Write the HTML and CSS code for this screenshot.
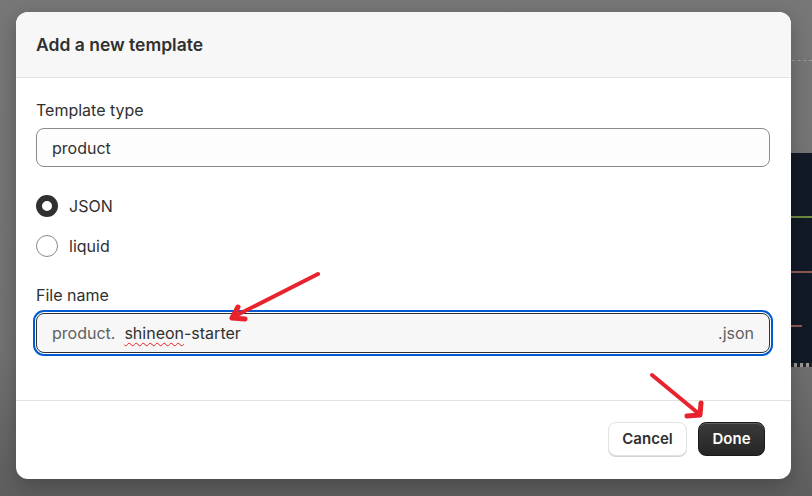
FILE: index.html
```html
<!DOCTYPE html>
<html>
<head>
<meta charset="utf-8">
<link rel="stylesheet" href="styles.css">
</head>
<body>
<div class="backdrop">
  <div class="bg-dash"></div>
  <div class="bg-panel">
    <div class="bg-line green"></div>
    <div class="bg-line red1"></div>
    <div class="bg-line red2"></div>
  </div>
  <div class="bg-checker"></div>
</div>
<div class="modal">
  <div class="modal-header">Add a new template</div>
  <div class="modal-body">
    <div class="field">
      <label class="label">Template type</label>
      <div class="input">product</div>
    </div>
    <div class="radios">
      <div class="radio-row"><span class="radio checked"></span><span>JSON</span></div>
      <div class="radio-row"><span class="radio"></span><span>liquid</span></div>
    </div>
    <div class="field">
      <label class="label">File name</label>
      <div class="input focus">
        <span class="prefix">product.</span>
        <span class="value"><span class="misspelled">shineon</span>-starter</span>
        <span class="suffix">.json</span>
      </div>
    </div>
  </div>
  <div class="modal-footer">
    <button class="btn cancel">Cancel</button>
    <button class="btn done">Done</button>
  </div>
</div>
<svg class="arrows" width="812" height="496" viewBox="0 0 812 496">
  <g stroke="#e8232d" stroke-linecap="round" stroke-linejoin="round" fill="none">
    <line x1="318" y1="274" x2="235" y2="316" stroke-width="4"/>
    <polyline points="238,307 232,318 245,319" stroke-width="5"/>
    <line x1="652" y1="375" x2="698" y2="413" stroke-width="4"/>
    <polyline points="701,403 700,415 687,416" stroke-width="5"/>
  </g>
</svg>
</body>
</html>
```
FILE: styles.css
```css
* { box-sizing: border-box; }
html, body { margin: 0; padding: 0; }
body {
  width: 812px;
  height: 496px;
  overflow: hidden;
  position: relative;
  background: linear-gradient(180deg, #777777 0%, #727272 70%, #5e5e5e 100%);
  font-family: Inter, "Noto Sans", sans-serif;
  color: #303030;
  padding: 12px 21px 17px 16px;
}
.backdrop { position: absolute; inset: 0; }
.bg-dash {
  position: absolute; left: 792px; top: 60px; width: 20px; height: 0;
  border-top: 1px dashed #9a9a9a;
}
.bg-panel {
  position: absolute; left: 791px; top: 153px; width: 21px; height: 211px;
  background: #121a27;
}
.bg-line { position: absolute; left: 0; height: 2px; }
.bg-line.green { top: 63px; width: 21px; background: #6d8a3e; }
.bg-line.red1 { top: 118px; width: 21px; background: #8d5a52; }
.bg-line.red2 { top: 172px; width: 11px; background: #8d5a52; }
.bg-checker {
  position: absolute; left: 791px; top: 363px; width: 21px; height: 4px;
  background: repeating-linear-gradient(90deg, #222 0 3px, #999 3px 6px);
}
.modal {
  position: relative;
  width: 775px;
  height: 467px;
  background: #fff;
  border-radius: 12px;
  overflow: hidden;
  display: flex;
  flex-direction: column;
  box-shadow: 0 6px 20px rgba(0,0,0,0.25);
}
.modal-header {
  height: 66px;
  background: #f7f7f7;
  border-bottom: 1px solid #e3e3e3;
  padding: 0 20px;
  display: flex;
  align-items: center;
  font-size: 17.5px;
  font-weight: 600;
  color: #303030;
  flex-shrink: 0;
}
.modal-body {
  flex: 1;
  padding: 22px 21px 0 20px;
  display: flex;
  flex-direction: column;
}
.field { display: flex; flex-direction: column; }
.label {
  font-size: 16px;
  line-height: 20px;
  margin-bottom: 8px;
  color: #303030;
}
.input {
  height: 39px;
  border: 1px solid #8a8a8a;
  border-radius: 8px;
  background: #fdfdfd;
  display: flex;
  align-items: center;
  padding: 0 15px;
  font-size: 16px;
  color: #303030;
}
.input.focus {
  height: 40px;
  background: #f7f7f7;
  border: 1px solid #303030;
  outline: 2px solid #005bd3;
  outline-offset: 1px;
}
.prefix { color: #616161; margin-right: 9px; }
.value { flex: 1; }
.misspelled {
  text-decoration: underline wavy #e51c23;
  text-decoration-thickness: 1px;
  text-underline-offset: 3px;
}
.suffix { color: #616161; }
.radios {
  display: flex;
  flex-direction: column;
  gap: 17px;
  padding: 27px 0 28px;
}
.radio-row {
  display: flex;
  align-items: center;
  gap: 11px;
  font-size: 16px;
  height: 23px;
}
.radio {
  width: 22px; height: 22px;
  border-radius: 50%;
  border: 1px solid #8a8a8a;
  background: #fff;
}
.radio.checked { border: 6px solid #303030; }
.modal-footer {
  height: 79px;
  border-top: 1px solid #e3e3e3;
  display: flex;
  justify-content: flex-end;
  align-items: center;
  gap: 11px;
  padding: 0 26px 3px 0;
  flex-shrink: 0;
}
.btn {
  height: 34px;
  border-radius: 8px;
  font-family: Inter, "Noto Sans", sans-serif;
  font-size: 15px;
  font-weight: 600;
  padding: 0;
}
.cancel {
  width: 79px;
  background: #fff;
  color: #303030;
  border: 1px solid #e3e3e3;
  box-shadow: 0 1px 0 #d4d4d4;
}
.done {
  width: 67px;
  background: linear-gradient(180deg, #3a3a3a, #262626);
  color: #fff;
  border: 1px solid #1a1a1a;
  box-shadow: inset 0 1px 0 rgba(255,255,255,0.2);
}
.arrows { position: absolute; left: 0; top: 0; pointer-events: none; }
```
